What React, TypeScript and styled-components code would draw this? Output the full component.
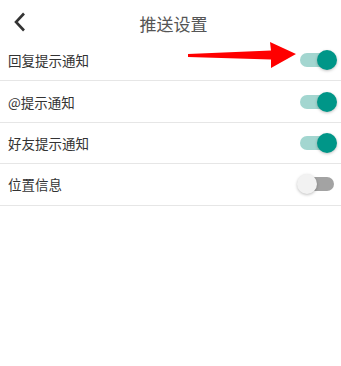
import React, { useState } from 'react'
import styled, { createGlobalStyle } from 'styled-components'

const GlobalStyle = createGlobalStyle`
  html, body {
    margin: 0;
    padding: 0;
    background: #ffffff;
  }
  body {
    font-family: "Noto Sans CJK SC", "Noto Sans", sans-serif;
    color: #333333;
  }
`

const Page = styled.div`
  position: relative;
  width: 341px;
  min-height: 366px;
  background: #ffffff;
`

const Header = styled.header`
  display: flex;
  align-items: center;
  height: 40px;
  padding: 0 10px;
  box-sizing: border-box;
`

const BackButton = styled.button`
  display: flex;
  align-items: center;
  justify-content: center;
  width: 20px;
  height: 32px;
  padding: 0;
  border: none;
  background: none;
  cursor: pointer;
  margin-top: 4px;
`

const Title = styled.h1`
  flex: 1;
  margin: 0 20px 0 0;
  padding-left: 6px;
  text-align: center;
  font-size: 17px;
  font-weight: 400;
  color: #555555;
  padding-top: 6px;
`

const List = styled.ul`
  list-style: none;
  margin: 0;
  padding: 0;
`

const Row = styled.li`
  display: flex;
  align-items: center;
  justify-content: space-between;
  height: 40.4px;
  padding: 0 4px 0 8px;
  border-bottom: 1px solid #e6e6e6;
  box-sizing: content-box;
`

const Label = styled.span`
  font-size: 13.5px;
  color: #333333;
`

const SwitchRoot = styled.button<{ $on: boolean }>`
  position: relative;
  width: 40px;
  height: 22px;
  padding: 0;
  border: none;
  background: none;
  cursor: pointer;
`

const Track = styled.span<{ $on: boolean }>`
  position: absolute;
  left: 3px;
  right: 3px;
  top: 4px;
  height: 14px;
  border-radius: 7px;
  background: ${p => (p.$on ? '#a3d6d0' : '#a3a3a3')};
`

const Thumb = styled.span<{ $on: boolean }>`
  position: absolute;
  top: 1px;
  left: ${p => (p.$on ? '20px' : '0px')};
  width: 20px;
  height: 20px;
  border-radius: 50%;
  background: ${p => (p.$on ? '#009688' : '#f2f2f2')};
  box-shadow: 0 1px 3px rgba(0, 0, 0, 0.25);
  transition: left 0.15s;
`

const Annotation = styled.svg`
  position: absolute;
  left: 0;
  top: 0;
  pointer-events: none;
`

const Switch: React.FC<{ on: boolean; onToggle: () => void }> = ({ on, onToggle }) => (
  <SwitchRoot type="button" $on={on} onClick={onToggle}>
    <Track $on={on} />
    <Thumb $on={on} />
  </SwitchRoot>
)

const settings = [
  { key: 'reply', label: '回复提示通知', on: true },
  { key: 'at', label: '@提示通知', on: true },
  { key: 'friend', label: '好友提示通知', on: true },
  { key: 'location', label: '位置信息', on: false },
]

const App: React.FC = () => {
  const [values, setValues] = useState(settings.map(s => s.on))

  const toggle = (i: number) => {
    const next = [...values]
    next[i] = !next[i]
    setValues(next)
  }

  return (
    <Page>
      <GlobalStyle />
      <Header>
        <BackButton type="button" aria-label="返回">
          <svg width="14" height="20" viewBox="0 0 14 20">
            <polyline points="11,1.5 3,10 11,18.5" fill="none" stroke="#333" strokeWidth="2.6" />
          </svg>
        </BackButton>
        <Title>推送设置</Title>
      </Header>
      <List>
        {settings.map((s, i) => (
          <Row key={s.key}>
            <Label>{s.label}</Label>
            <Switch on={values[i]} onToggle={() => toggle(i)} />
          </Row>
        ))}
      </List>
      {/* red arrow annotation pointing at the first switch */}
      <Annotation width="341" height="366" viewBox="0 0 341 366">
        <polygon points="188,54 271,50.5 270,42 296,54 271,68 271,59.5 188,57" fill="#ff0000" />
      </Annotation>
    </Page>
  )
}

export default App
